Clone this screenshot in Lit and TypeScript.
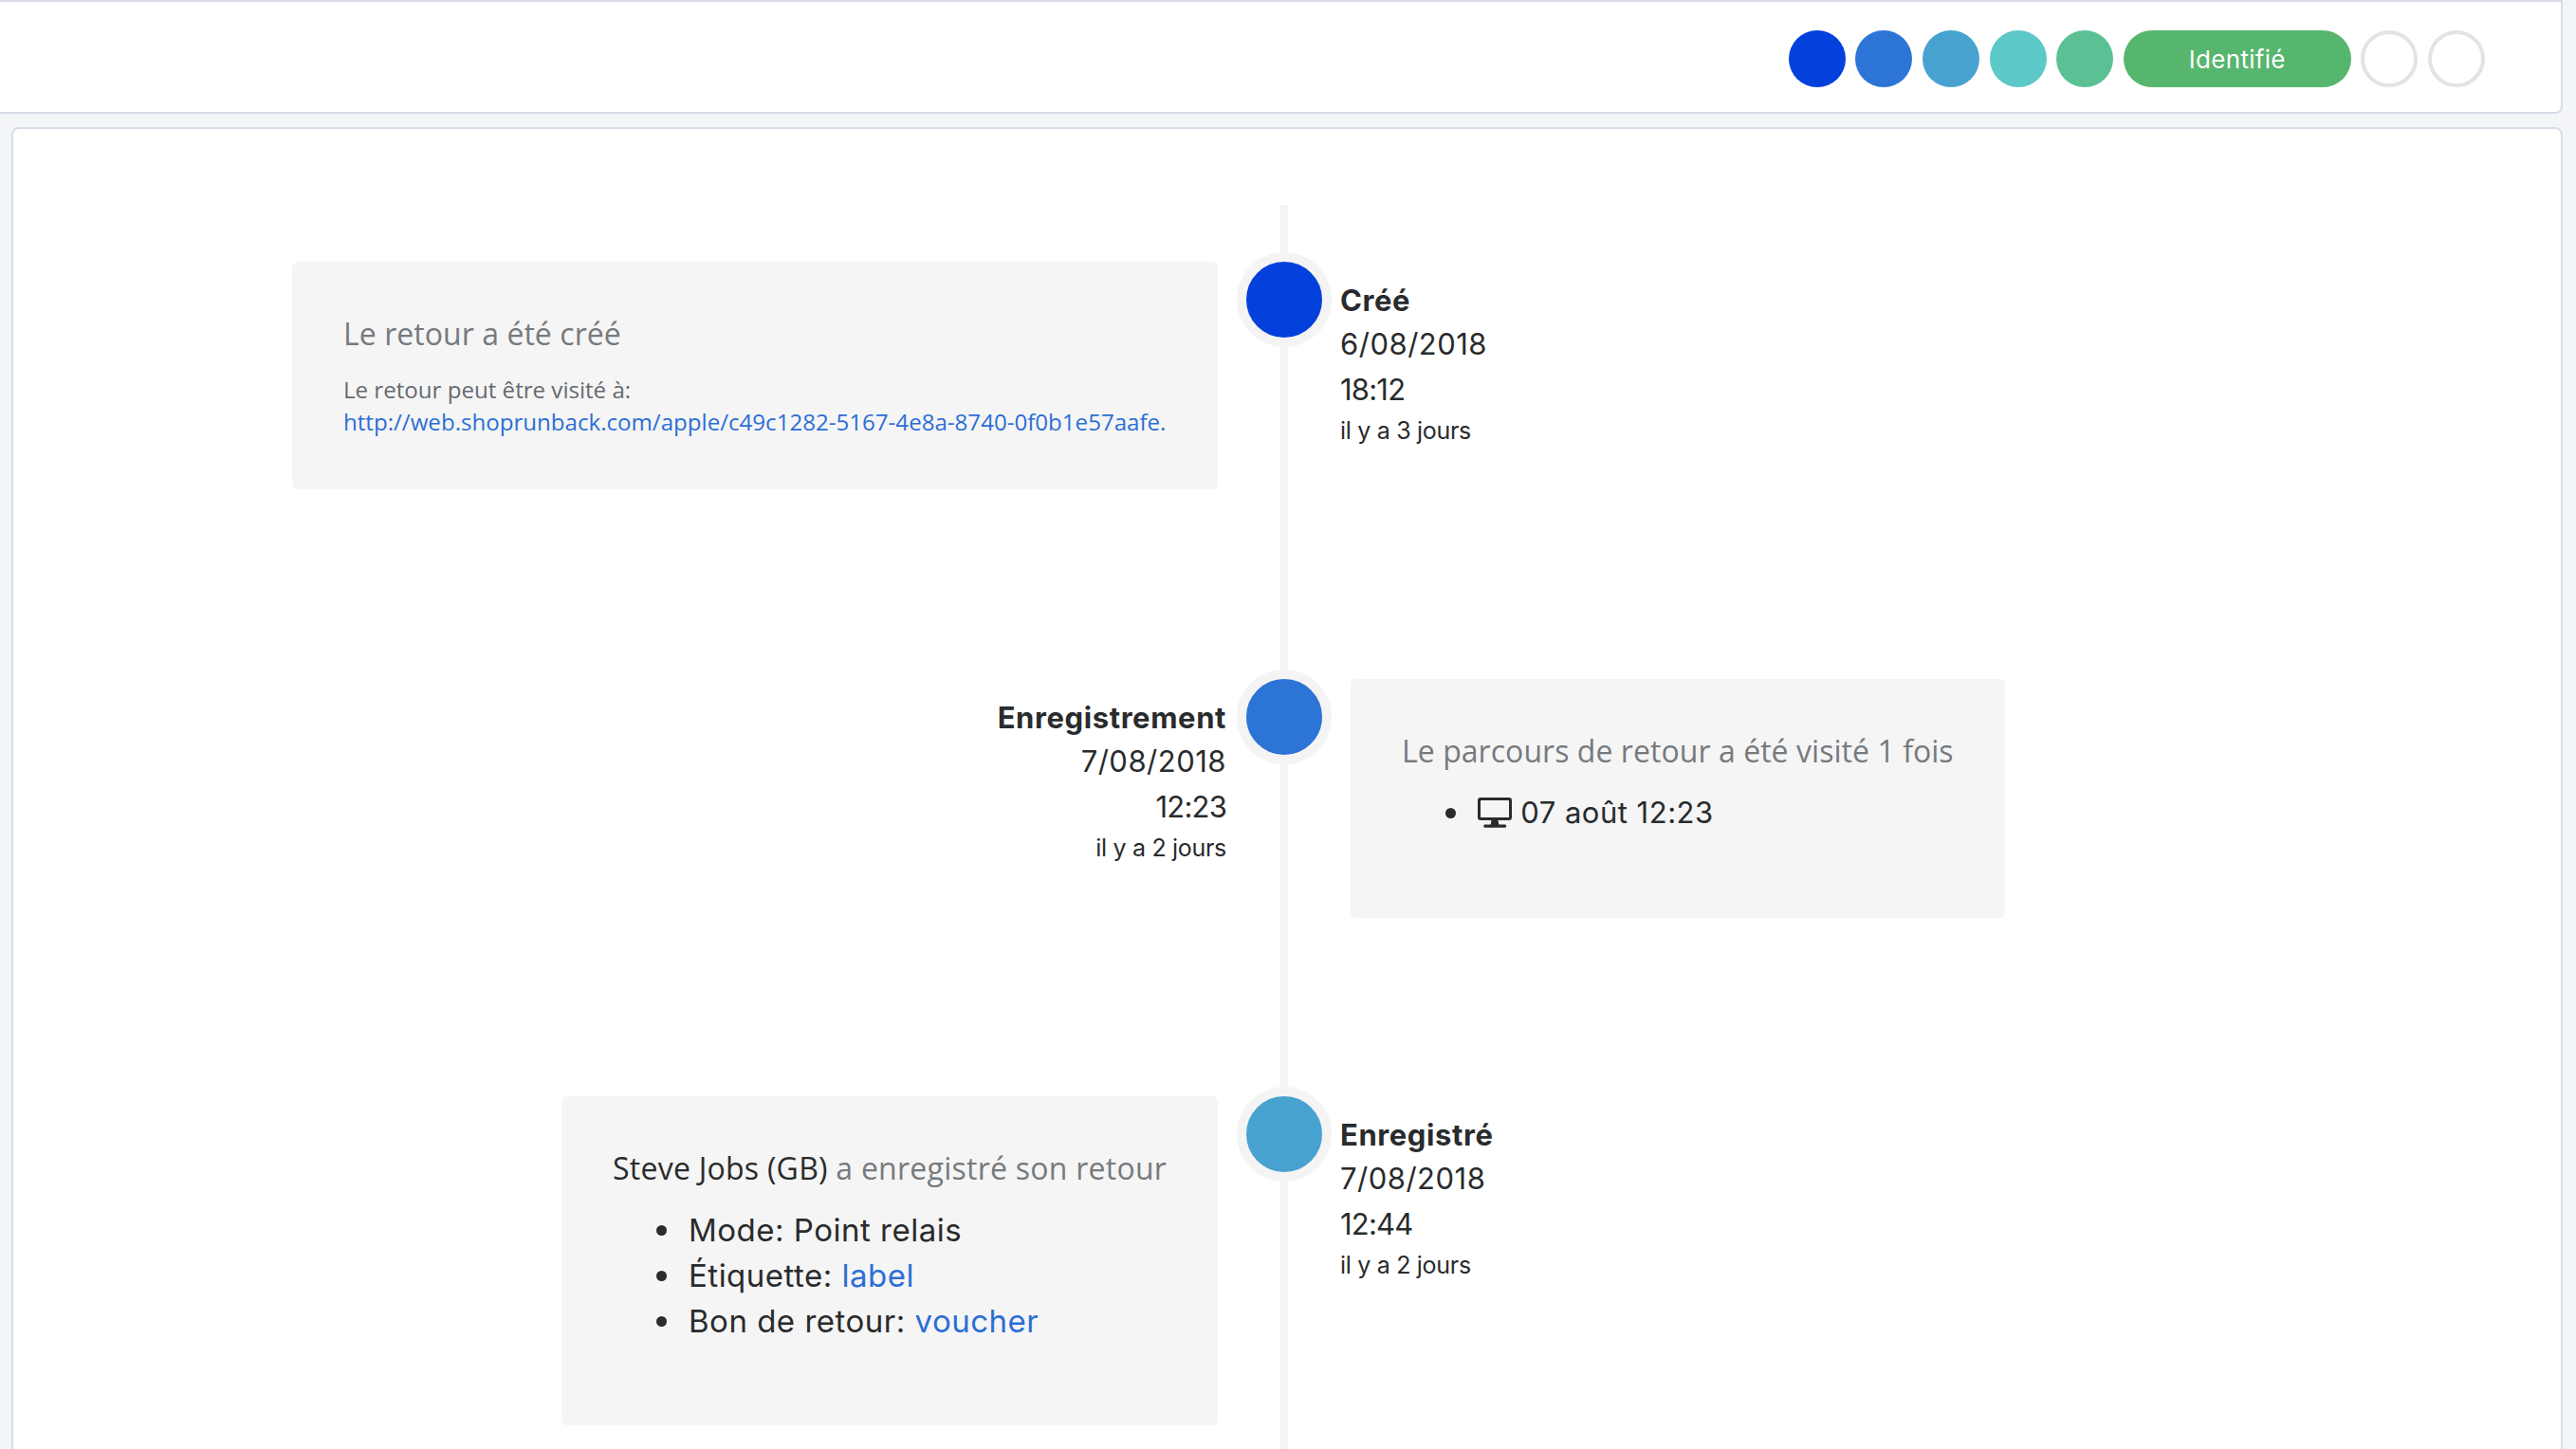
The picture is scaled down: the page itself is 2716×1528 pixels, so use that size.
import { LitElement, html, css } from 'lit';
import { customElement } from 'lit/decorators.js';

const desktopIcon = html`<svg class="icon" viewBox="0 0 36 32" aria-hidden="true">
  <path fill="currentColor" fill-rule="evenodd" d="M3 0h30a3 3 0 0 1 3 3v18a3 3 0 0 1-3 3H3a3 3 0 0 1-3-3V3a3 3 0 0 1 3-3zm.5 3a.5.5 0 0 0-.5.5v17a.5.5 0 0 0 .5.5h29a.5.5 0 0 0 .5-.5v-17a.5.5 0 0 0-.5-.5z"/>
  <path fill="currentColor" d="M14.5 24h7l.8 4.4H29a1.7 1.7 0 0 1 0 3.3H7.5a1.7 1.7 0 0 1 0-3.3h6.2z"/>
</svg>`;

@customElement('app-root')
export class AppRoot extends LitElement {
  static styles = css`
    :host {
      display: block;
      height: 1528px;
      overflow: hidden;
      background: #f4f5f8;
      font-family: Inter, sans-serif;
      color: #292b2c;
    }

    .header {
      box-sizing: border-box;
      width: 2702px;
      height: 120px;
      display: flex;
      justify-content: flex-end;
      gap: 10.6px;
      padding: 30px 80px 26px 0;
      background: #fff;
      border: 2px solid #d8dce8;
      border-left: 0;
      border-bottom-right-radius: 8px;
    }

    .step {
      box-sizing: border-box;
      width: 60px;
      height: 60px;
      border-radius: 30px;
    }

    .step.empty {
      background: #fff;
      border: 4px solid #e3e3e3;
    }

    .step.current {
      width: 240px;
      display: flex;
      align-items: center;
      justify-content: center;
      color: #fff;
      font-size: 26px;
      letter-spacing: 0.3px;
    }

    .main {
      box-sizing: border-box;
      margin: 14px 14px 0 12px;
      padding: 140px 0 0;
      height: 1500px;
      background: #fff;
      border: 2px solid #d8dce8;
      border-radius: 8px 8px 0 0;
      position: relative;
    }

    .main::before {
      content: '';
      position: absolute;
      left: 1336px;
      top: 80px;
      bottom: 0;
      width: 8px;
      background: #f4f4f4;
    }

    .row {
      position: relative;
      display: grid;
      grid-template-columns: 1290px 100px 1fr;
      height: 440px;
      align-items: start;
    }

    .left {
      display: flex;
      justify-content: flex-end;
      padding-right: 20px;
    }

    .node {
      box-sizing: border-box;
      width: 100px;
      height: 100px;
      margin-top: -10px;
      border: 10px solid #f4f4f4;
      border-radius: 50%;
    }

    .right {
      padding-left: 20px;
    }

    .meta {
      font-size: 31px;
      line-height: 48px;
      letter-spacing: 0.5px;
      padding-top: 19px;
    }

    .left .meta {
      text-align: right;
      margin-right: -9px;
    }

    .right .meta {
      margin-left: -11px;
    }

    .meta b {
      display: block;
      font-size: 31px;
      line-height: 44px;
      font-weight: 700;
      letter-spacing: 0.6px;
    }

    .meta span {
      display: block;
    }

    .meta span.time {
      letter-spacing: -0.8px;
    }

    .meta small {
      display: block;
      font-size: 25px;
      line-height: 38px;
      letter-spacing: -0.3px;
    }

    .card {
      box-sizing: border-box;
      background: #f5f5f5;
      border-radius: 6px;
      padding: 55px 0 54px 54px;
    }

    .card h4 {
      margin: 0;
      font-family: 'Open Sans', sans-serif;
      font-size: 32px;
      line-height: 42px;
      font-weight: 400;
      letter-spacing: 0.05px;
      white-space: nowrap;
      color: #767a7e;
    }

    .card h4 strong {
      font-weight: 400;
      color: #292b2c;
    }

    .card p {
      margin: 21px 0 0;
      font-family: 'Open Sans', sans-serif;
      font-size: 24.1px;
      line-height: 34px;
      color: #666a6e;
    }

    a {
      color: #2c6ed5;
      text-decoration: none;
    }

    ul {
      list-style: none;
      margin: 20px 0 0 46px;
      padding: 0;
      font-size: 31px;
      line-height: 48px;
      letter-spacing: 0.5px;
    }

    li {
      display: flex;
      align-items: center;
    }

    li::before {
      content: '';
      flex: none;
      width: 11px;
      height: 11px;
      margin-right: 23px;
      border-radius: 50%;
      background: #292b2c;
    }

    .icon {
      width: 36px;
      height: 32px;
      vertical-align: -5px;
    }

    .c1 { width: 976px; height: 240px; }
    .c2 { width: 690px; height: 252px; }
    .c3 { width: 692px; height: 347px; }

    .c3 h4 {
      letter-spacing: 0.25px;
    }

    .c3 ul {
      font-size: 33px;
    }
  `;

  render() {
    return html`
      <div class="header">
        <div class="step" style="background:#0340dc"></div>
        <div class="step" style="background:#2c74d6"></div>
        <div class="step" style="background:#47a2d0"></div>
        <div class="step" style="background:#5dc8c8"></div>
        <div class="step" style="background:#5cc095"></div>
        <div class="step current" style="background:#57b66e">Identifié</div>
        <div class="step empty"></div>
        <div class="step empty"></div>
      </div>
      <div class="main">
        <div class="row">
          <div class="left">
            <div class="card c1">
              <h4>Le retour a été créé</h4>
              <p>Le retour peut être visité à:<br /><a href="#">http://web.shoprunback.com/apple/c49c1282-5167-4e8a-8740-0f0b1e57aafe.</a></p>
            </div>
          </div>
          <div class="node" style="background:#0340dc"></div>
          <div class="right">
            <div class="meta"><b>Créé</b><span>6/08/2018</span><span class="time">18:12</span><small>il y a 3 jours</small></div>
          </div>
        </div>
        <div class="row">
          <div class="left">
            <div class="meta"><b>Enregistrement</b><span>7/08/2018</span><span class="time">12:23</span><small>il y a 2 jours</small></div>
          </div>
          <div class="node" style="background:#2c74d6"></div>
          <div class="right">
            <div class="card c2">
              <h4>Le parcours de retour a été visité 1 fois</h4>
              <ul><li><span>${desktopIcon} 07 août 12:23</span></li></ul>
            </div>
          </div>
        </div>
        <div class="row">
          <div class="left">
            <div class="card c3">
              <h4><strong>Steve Jobs (GB)</strong> a enregistré son retour</h4>
              <ul>
                <li><span>Mode: Point relais</span></li>
                <li><span>Étiquette: <a href="#">label</a></span></li>
                <li><span>Bon de retour: <a href="#">voucher</a></span></li>
              </ul>
            </div>
          </div>
          <div class="node" style="background:#47a2d0"></div>
          <div class="right">
            <div class="meta"><b>Enregistré</b><span>7/08/2018</span><span class="time">12:44</span><small>il y a 2 jours</small></div>
          </div>
        </div>
      </div>
    `;
  }
}
